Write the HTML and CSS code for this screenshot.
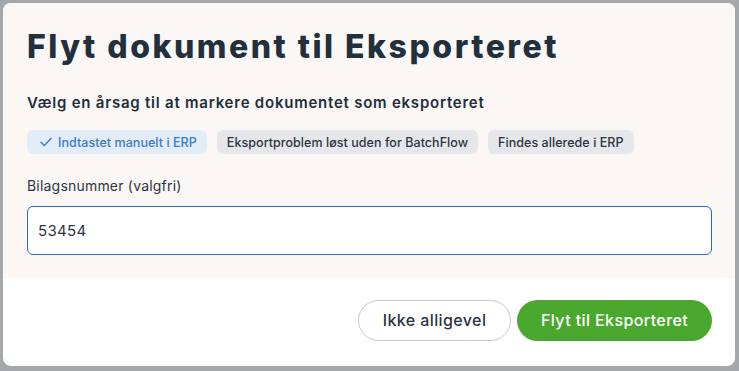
FILE: index.html
```html
<!DOCTYPE html>
<html lang="da">
<head>
<meta charset="utf-8">
<title>Flyt dokument</title>
<link rel="stylesheet" href="styles.css">
</head>
<body>
<div class="modal">
  <div class="modal-body">
    <h1 class="title">Flyt dokument til Eksporteret</h1>
    <p class="subtitle">Vælg en årsag til at markere dokumentet som eksporteret</p>
    <div class="chips">
      <span class="chip chip-active"><svg class="check" width="12" height="10" viewBox="0 0 12 10"><path d="M1 5.2 L4.3 8.4 L11 1.5" fill="none" stroke="currentColor" stroke-width="1.4" stroke-linecap="round" stroke-linejoin="round"/></svg>Indtastet manuelt i ERP</span>
      <span class="chip">Eksportproblem løst uden for BatchFlow</span>
      <span class="chip">Findes allerede i ERP</span>
    </div>
    <label class="label" for="bilag">Bilagsnummer (valgfri)</label>
    <input class="input" id="bilag" type="text" value="53454">
  </div>
  <div class="modal-footer">
    <button class="btn btn-secondary">Ikke alligevel</button>
    <button class="btn btn-primary">Flyt til Eksporteret</button>
  </div>
</div>
</body>
</html>
```
FILE: styles.css
```css
* { box-sizing: border-box; }
html, body { margin: 0; padding: 0; }
body {
  background: #a5a8ab;
  font-family: Inter, "Noto Sans", sans-serif;
  color: #222f3b;
  height: 371px;
  padding: 3px 4px 5px 3px;
}
.modal {
  width: 732px;
  height: 363px;
  background: #ffffff;
  border-radius: 8px;
  overflow: hidden;
  display: flex;
  flex-direction: column;
}
.modal-body {
  background: #faf7f5;
  padding: 24px 23px 22px 24px;
  height: 275px;
}
.title {
  margin: 0;
  font-size: 32px;
  font-weight: 800;
  line-height: 40px;
  color: #22303d;
  letter-spacing: 2.5px;
}
.subtitle {
  margin: 26px 0 0;
  font-size: 15px;
  font-weight: 600;
  line-height: 20px;
  color: #222f3b;
  letter-spacing: 0.77px;
}
.chips {
  display: flex;
  gap: 10px;
  margin-top: 17px;
}
.chip {
  display: inline-flex;
  align-items: center;
  height: 24px;
  padding: 0 10px;
  border-radius: 6px;
  background: #e5e7ea;
  color: #2c3540;
  font-size: 12.5px;
  font-weight: 500;
  letter-spacing: 0.05px;
}
.chip-active {
  background: #e3edf8;
  color: #3a7bc8;
  padding-left: 13px;
}
.check { margin-right: 6px; }
.label {
  display: block;
  margin-top: 23px;
  font-size: 14px;
  line-height: 18px;
  color: #2d3640;
  letter-spacing: 0.2px;
}
.input {
  display: block;
  margin-top: 11px;
  width: 685px;
  height: 49px;
  border: 1.5px solid #1e6fd0;
  border-radius: 6px;
  background: #fff;
  padding: 0 10px;
  font-family: inherit;
  font-size: 15px;
  color: #2d3640;
  outline: none;
  letter-spacing: 0.3px;
}
.modal-footer {
  flex: 1;
  display: flex;
  justify-content: flex-end;
  align-items: center;
  gap: 6px;
  padding: 0 23px 4px 0;
}
.btn {
  height: 41px;
  border-radius: 21px;
  font-family: inherit;
  font-size: 16px;
  font-weight: 500;
  padding: 0;
  letter-spacing: 0.4px;
}
.btn-secondary {
  width: 153px;
  background: #fff;
  border: 1px solid #c8c8c8;
  color: #2a3540;
}
.btn-primary {
  width: 195px;
  background: #4aa82e;
  border: none;
  color: #fff;
}
```
